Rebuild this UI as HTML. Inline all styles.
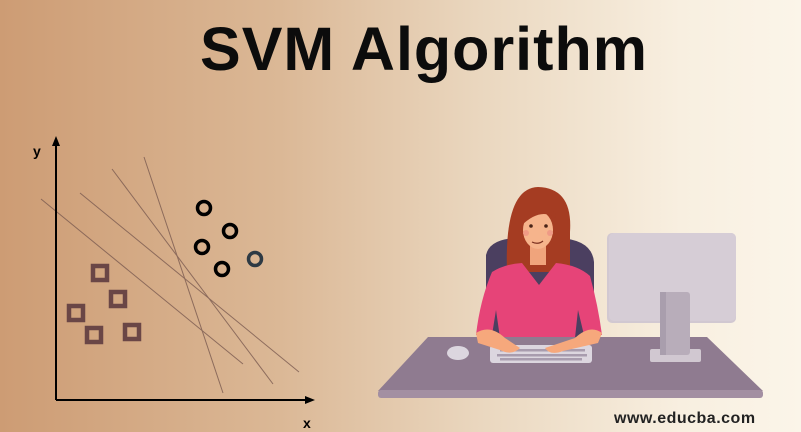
<!DOCTYPE html>
<html><head><style>
html,body{margin:0;padding:0;width:801px;height:432px;overflow:hidden}
body{background:linear-gradient(90deg,#cd9c74 0%,#dbb896 35%,#ead7bf 60%,#f8efe0 85%,#fbf5e9 100%);font-family:"Liberation Sans",sans-serif;position:relative}
.t{position:absolute;left:0;width:848px;text-align:center;top:14px;font-size:61px;font-weight:bold;color:#0c0c0c;letter-spacing:1px}
.w{position:absolute;left:614px;top:410px;font-size:16px;font-weight:bold;color:#222;letter-spacing:0.5px}
</style></head><body>
<svg width="801" height="432" style="position:absolute;left:0;top:0">
<g stroke="#7a5a50" stroke-width="1" opacity="0.8">
<line x1="41" y1="199" x2="243" y2="364"/><line x1="80" y1="193" x2="299" y2="372"/>
<line x1="112" y1="169" x2="273" y2="384"/><line x1="144" y1="157" x2="223" y2="393"/></g>
<g stroke="#000" stroke-width="2" fill="none">
<line x1="56" y1="142" x2="56" y2="400"/><line x1="56" y1="400" x2="310" y2="400"/></g>
<polygon points="56,136 52,146 60,146" fill="#000"/><polygon points="315,400 305,396 305,404" fill="#000"/>
<text x="33" y="156" font-size="14" font-weight="bold" font-family="Liberation Sans">y</text>
<text x="303" y="428" font-size="14" font-weight="bold" font-family="Liberation Sans">x</text>
<g fill="none" stroke="#000" stroke-width="3.5">
<circle cx="204" cy="208" r="6.5"/><circle cx="230" cy="231" r="6.5"/><circle cx="202" cy="247" r="6.5"/><circle cx="222" cy="269" r="6.5"/></g>
<circle cx="255" cy="259" r="6.5" fill="none" stroke="#2e3a44" stroke-width="3.5"/>
<g fill="none" stroke="#6a4646" stroke-width="4.5">
<rect x="93" y="266" width="14" height="14"/><rect x="111" y="292" width="14" height="14"/><rect x="69" y="306" width="14" height="14"/><rect x="87" y="328" width="14" height="14"/><rect x="125" y="325" width="14" height="14"/></g>
<path d="M486,337 L486,255 Q490,238 520,238 L560,238 Q592,240 594,262 L594,337 Z" fill="#4b3f60"/>
<path d="M507,272 Q504,188 538,187 Q573,188 570,232 L570,272 Z" fill="#a53c22"/>
<rect x="530" y="245" width="16" height="20" fill="#f0a47c"/>
<ellipse cx="538" cy="230" rx="15" ry="19" fill="#f6b48c"/>
<path d="M521,222 Q530,202 555,212 L556,218 Q540,207 521,226 Z" fill="#a53c22"/>
<circle cx="531" cy="226" r="1.8" fill="#4a2418"/><circle cx="546" cy="226" r="1.8" fill="#4a2418"/>
<circle cx="526" cy="233" r="3" fill="#ef9a86"/><circle cx="550" cy="233" r="3" fill="#ef9a86"/>
<path d="M532,242 Q538,245 543,241" stroke="#7a3020" stroke-width="1.2" fill="none"/>
<path d="M476,335 Q480,300 492,272 Q505,264 522,263 L539,285 L556,263 Q578,265 590,276 Q598,305 602,335 L584,335 L578,310 L575,338 L500,338 L496,310 L492,335 Z" fill="#e64478"/>
<path d="M428,337 L707,337 L763,391 L378,391 Z" fill="#8f7b90"/>
<rect x="378" y="390" width="385" height="8" rx="3" fill="#a38fa2"/>
<ellipse cx="458" cy="353" rx="11" ry="7" fill="#dcd6df"/>
<rect x="490" y="345" width="102" height="18" rx="3" fill="#dcd6df"/>
<g fill="#a89cae"><rect x="500" y="349" width="85" height="2.5"/><rect x="497" y="354" width="90" height="2.5"/><rect x="500" y="358" width="82" height="2.5"/></g>
<path d="M476,333 Q490,324 505,338 L520,348 Q512,356 500,350 L478,343 Z" fill="#f6a87c"/>
<path d="M602,333 Q590,324 575,338 L545,348 Q550,356 563,351 L598,343 Z" fill="#f6a87c"/>
<rect x="607" y="233" width="129" height="90" rx="5" fill="#d1c8d1"/>
<rect x="609" y="233" width="127" height="88" rx="5" fill="#d6cdd6"/>
<rect x="650" y="349" width="51" height="13" rx="2" fill="#d1c8d1"/>
<rect x="660" y="292" width="30" height="63" rx="3" fill="#b8adba"/>
<rect x="660" y="292" width="6" height="63" fill="#a99ead"/>
</svg>
<div class="t">SVM Algorithm</div>
<div class="w">www.educba.com</div>
</body></html>
